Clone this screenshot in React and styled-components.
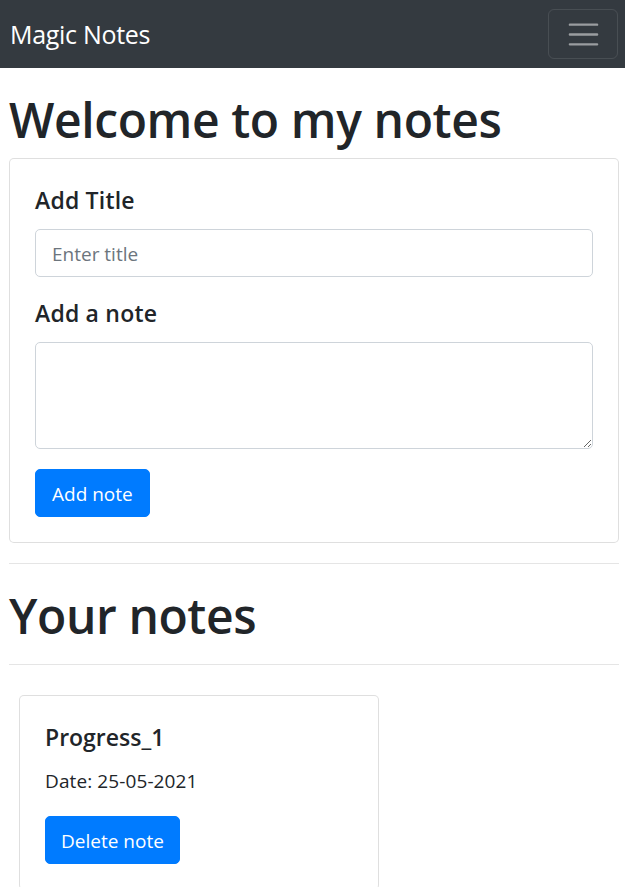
import React, { useState } from "react";
import styled, { createGlobalStyle } from "styled-components";

const COLORS = {
  dark: "#343a40",
  text: "#212529",
  muted: "#6c757d",
  primary: "#007bff",
  cardBorder: "rgba(0, 0, 0, 0.125)",
  inputBorder: "#ced4da",
  rule: "rgba(0, 0, 0, 0.1)",
};

const GlobalStyle = createGlobalStyle`
  * {
    box-sizing: border-box;
  }
  body {
    margin: 0;
    background: #fff;
    color: ${COLORS.text};
    font-family: "Open Sans", "Noto Sans", "Liberation Sans", sans-serif;
    font-size: 20px;
    line-height: 1.5;
  }
`;

const Navbar = styled.nav`
  display: flex;
  align-items: center;
  justify-content: space-between;
  height: 68px;
  padding: 0 7px 0 10px;
  background-color: ${COLORS.dark};
`;

const Brand = styled.a`
  color: #fff;
  font-size: 25px;
  line-height: 37px;
  text-decoration: none;
  letter-spacing: -0.3px;
`;

const Toggler = styled.button`
  display: flex;
  align-items: center;
  justify-content: center;
  width: 70px;
  height: 50px;
  padding: 0;
  background: transparent;
  border: 1px solid rgba(255, 255, 255, 0.1);
  border-radius: 6px;
`;

const Container = styled.main`
  padding: 20px 6px 0 9px;
`;

const Heading = styled.h1`
  margin: 0 0 10px;
  padding-top: 2px;
  height: 60px;
  font-size: 48px;
  font-weight: 600;
  line-height: 60px;
  letter-spacing: -0.4px;
`;

const Card = styled.div`
  border: 1px solid ${COLORS.cardBorder};
  border-radius: 5px;
  background: #fff;
  width: ${(p) => p.width || "auto"};
  margin: ${(p) => p.margin || "0"};
`;

const CardBody = styled.div`
  padding: 25px;
`;

const FormGroup = styled.div`
  margin-bottom: 20px;
`;

const Label = styled.label`
  display: block;
  margin-bottom: 15px;
  padding-top: 1px;
  height: 30px;
  font-size: 23px;
  font-weight: 600;
  line-height: 30px;
  letter-spacing: 0.2px;
`;

const Input = styled.input`
  display: block;
  width: 100%;
  height: 48px;
  padding: 9px 16px 7px;
  font-family: inherit;
  font-size: 19px;
  color: ${COLORS.text};
  border: 1px solid ${COLORS.inputBorder};
  border-radius: 5px;
  outline: none;

  &::placeholder {
    color: ${COLORS.muted};
  }
`;

const TextArea = styled.textarea`
  display: block;
  width: 100%;
  height: 107px;
  padding: 7px 16px;
  font-family: inherit;
  font-size: 19px;
  color: ${COLORS.text};
  border: 1px solid ${COLORS.inputBorder};
  border-radius: 5px;
  outline: none;
`;

const Button = styled.button`
  display: inline-block;
  height: 48px;
  padding: 2px ${(p) => p.pad || "16px"} 0;
  font-family: inherit;
  font-size: 19px;
  color: #fff;
  background-color: ${COLORS.primary};
  border: 1px solid ${COLORS.primary};
  border-radius: 5px;
`;

const Rule = styled.hr`
  margin: 20px 0;
  border: 0;
  border-top: 1px solid ${COLORS.rule};
`;

const NotesGrid = styled.div`
  display: flex;
  flex-wrap: wrap;
`;

const CardTitle = styled.h5`
  margin: 0 0 15px;
  padding-top: 1px;
  height: 30px;
  font-size: 23px;
  font-weight: 600;
  line-height: 30px;
`;

const CardText = styled.p`
  margin: 0 0 20px;
  font-size: 19px;
  line-height: 30px;
  letter-spacing: 0.1px;
`;

const TogglerIcon = () => (
  <svg width="37" height="37" viewBox="0 0 30 30">
    <path
      d="M4 7h22M4 15h22M4 23h22"
      stroke="rgba(255,255,255,0.5)"
      strokeWidth="2"
      strokeLinecap="round"
    />
  </svg>
);

const App = () => {
  const [notes] = useState([{ title: "Progress_1", date: "25-05-2021" }]);

  return (
    <>
      <GlobalStyle />
      <Navbar>
        <Brand href="#">Magic Notes</Brand>
        <Toggler aria-label="Toggle navigation">
          <TogglerIcon />
        </Toggler>
      </Navbar>
      <Container>
        <Heading>Welcome to my notes</Heading>
        <Card>
          <CardBody>
            <FormGroup>
              <Label htmlFor="title">Add Title</Label>
              <Input id="title" placeholder="Enter title" />
            </FormGroup>
            <FormGroup>
              <Label htmlFor="note">Add a note</Label>
              <TextArea id="note" rows="3" />
            </FormGroup>
            <Button>Add note</Button>
          </CardBody>
        </Card>
        <Rule />
        <Heading>Your notes</Heading>
        <Rule />
        <NotesGrid>
          {notes.map((note) => (
            <Card key={note.title} width="360px" margin="10px">
              <CardBody>
                <CardTitle>{note.title}</CardTitle>
                <CardText>Date: {note.date}</CardText>
                <Button pad="15px">Delete note</Button>
              </CardBody>
            </Card>
          ))}
        </NotesGrid>
      </Container>
    </>
  );
};

export default App;
